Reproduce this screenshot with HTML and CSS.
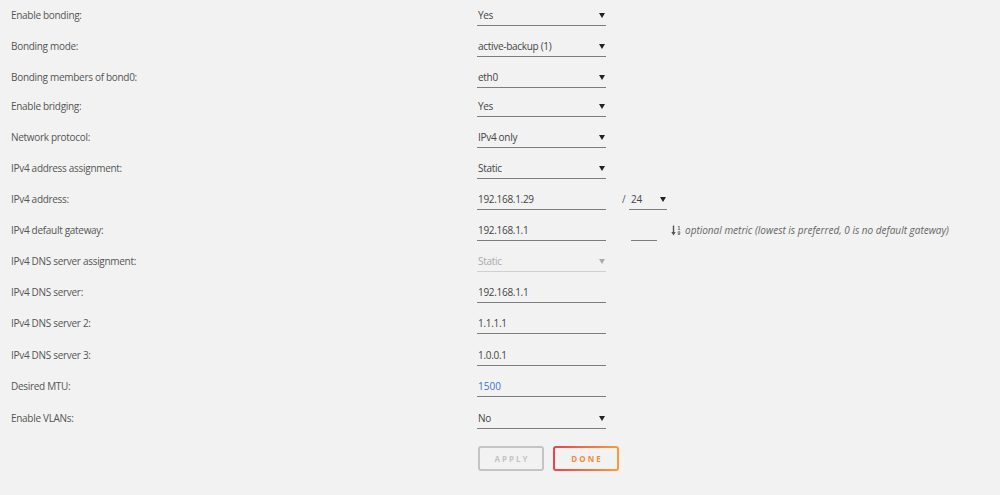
FILE: index.html
```html
<!DOCTYPE html>
<html lang="en">
<head>
  <meta charset="UTF-8" />
  <meta name="viewport" content="width=device-width, initial-scale=1.0"/>
  <title>Network Settings</title>
  <link rel="stylesheet" href="styles.css">
</head>
<body>

  <!-- Network settings form -->
  <div class="settings">

    <div class="row">
      <div class="label">Enable bonding:</div>
      <div class="field select"><span>Yes</span><i class="caret"></i></div>
    </div>

    <div class="row">
      <div class="label">Bonding mode:</div>
      <div class="field select"><span>active-backup (1)</span><i class="caret"></i></div>
    </div>

    <div class="row short">
      <div class="label">Bonding members of bond0:</div>
      <div class="field select"><span>eth0</span><i class="caret"></i></div>
    </div>

    <div class="row">
      <div class="label">Enable bridging:</div>
      <div class="field select"><span>Yes</span><i class="caret"></i></div>
    </div>

    <div class="row">
      <div class="label">Network protocol:</div>
      <div class="field select"><span>IPv4 only</span><i class="caret"></i></div>
    </div>

    <div class="row">
      <div class="label">IPv4 address assignment:</div>
      <div class="field select"><span>Static</span><i class="caret"></i></div>
    </div>

    <div class="row">
      <div class="label">IPv4 address:</div>
      <div class="field"><span>192.168.1.29</span></div>
      <div class="slash">/</div>
      <div class="field select mask"><span>24</span><i class="caret"></i></div>
    </div>

    <div class="row">
      <div class="label">IPv4 default gateway:</div>
      <div class="field"><span>192.168.1.1</span></div>
      <div class="field metric"></div>
      <div class="hint">
        <svg class="sort-icon" width="11" height="11" viewBox="0 0 11 11">
          <path d="M2.5 0.5 V8.5" stroke="#555" stroke-width="1.4"/>
          <path d="M0.3 7 L2.5 10.5 L4.7 7 Z" fill="#555"/>
          <text x="8" y="4.6" font-size="5" text-anchor="middle" fill="#555" font-family="Liberation Sans, sans-serif" font-weight="bold">1</text>
          <text x="8" y="10.2" font-size="5" text-anchor="middle" fill="#555" font-family="Liberation Sans, sans-serif" font-weight="bold">9</text>
        </svg>
        <em>optional metric (lowest is preferred, 0 is no default gateway)</em>
      </div>
    </div>

    <div class="row">
      <div class="label">IPv4 DNS server assignment:</div>
      <div class="field select disabled"><span>Static</span><i class="caret"></i></div>
    </div>

    <div class="row">
      <div class="label">IPv4 DNS server:</div>
      <div class="field"><span>192.168.1.1</span></div>
    </div>

    <div class="row tall">
      <div class="label">IPv4 DNS server 2:</div>
      <div class="field"><span>1.1.1.1</span></div>
    </div>

    <div class="row">
      <div class="label">IPv4 DNS server 3:</div>
      <div class="field"><span>1.0.0.1</span></div>
    </div>

    <div class="row tall">
      <div class="label">Desired MTU:</div>
      <div class="field"><span class="placeholder">1500</span></div>
    </div>

    <div class="row">
      <div class="label">Enable VLANs:</div>
      <div class="field select"><span>No</span><i class="caret"></i></div>
    </div>

    <div class="buttons">
      <button class="btn apply" disabled>APPLY</button>
      <button class="btn done">DONE</button>
    </div>

  </div>

</body>
</html>
```

FILE: styles.css
```css
html, body {
  overflow: hidden;
}

body {
  background-color: #f2f2f2;
  font-family: "Open Sans", sans-serif;
  font-size: 10px;
  letter-spacing: -0.3px;
  color: #555;
  margin: 0;
  padding: 0;
}

.settings {
  display: flex;
  flex-direction: column;
}

.row {
  display: flex;
  align-items: flex-start;
  height: 31px;
  flex-shrink: 0;
}

.row.short {
  height: 29px;
}

.row.tall {
  height: 32px;
}

.label {
  width: 477px;
  box-sizing: border-box;
  padding-left: 11px;
  line-height: 31px;
  flex-shrink: 0;
}

.field {
  margin-top: 6px;
  width: 128px;
  height: 19px;
  line-height: 19px;
  box-sizing: content-box;
  border-bottom: 1px solid #7d7d7d;
  padding-left: 1px;
  display: flex;
  justify-content: space-between;
  align-items: center;
  flex-shrink: 0;
  color: #444;
}

.select .caret {
  width: 0;
  height: 0;
  border-left: 3px solid transparent;
  border-right: 3px solid transparent;
  border-top: 5px solid #222;
  margin-right: 1px;
}

.disabled {
  color: #aaa;
  border-bottom-color: #d0d0d0;
}

.disabled .caret {
  border-top-color: #aaa;
}

.field .placeholder {
  color: #3f6fd0;
  letter-spacing: 0;
}

.slash {
  margin: 6px 0 0 16px;
  line-height: 19px;
  width: 7px;
}

.mask {
  width: 36px;
  padding-left: 2px;
}

.metric {
  width: 25px;
  margin-left: 25px;
}

.hint {
  margin: 6px 0 0 14px;
  line-height: 19px;
  display: flex;
  align-items: center;
  gap: 3px;
  color: #666;
  letter-spacing: 0;
}

.hint em {
  font-style: italic;
}

.buttons {
  display: flex;
  gap: 9px;
  margin: 12px 0 0 478px;
}

.btn {
  width: 66px;
  height: 25px;
  border-radius: 3px;
  font-family: "Open Sans", sans-serif;
  font-size: 8px;
  font-weight: bold;
  letter-spacing: 2px;
  padding: 0 0 0 2px;
  cursor: pointer;
}

.apply {
  background: transparent;
  border: 2px solid #c4c4c4;
  color: #c4c4c4;
}

.done {
  border: 2px solid transparent;
  background: linear-gradient(#f2f2f2, #f2f2f2) padding-box,
              linear-gradient(90deg, #e8434f, #fb9b37) border-box;
  color: #f5883d;
}
```
